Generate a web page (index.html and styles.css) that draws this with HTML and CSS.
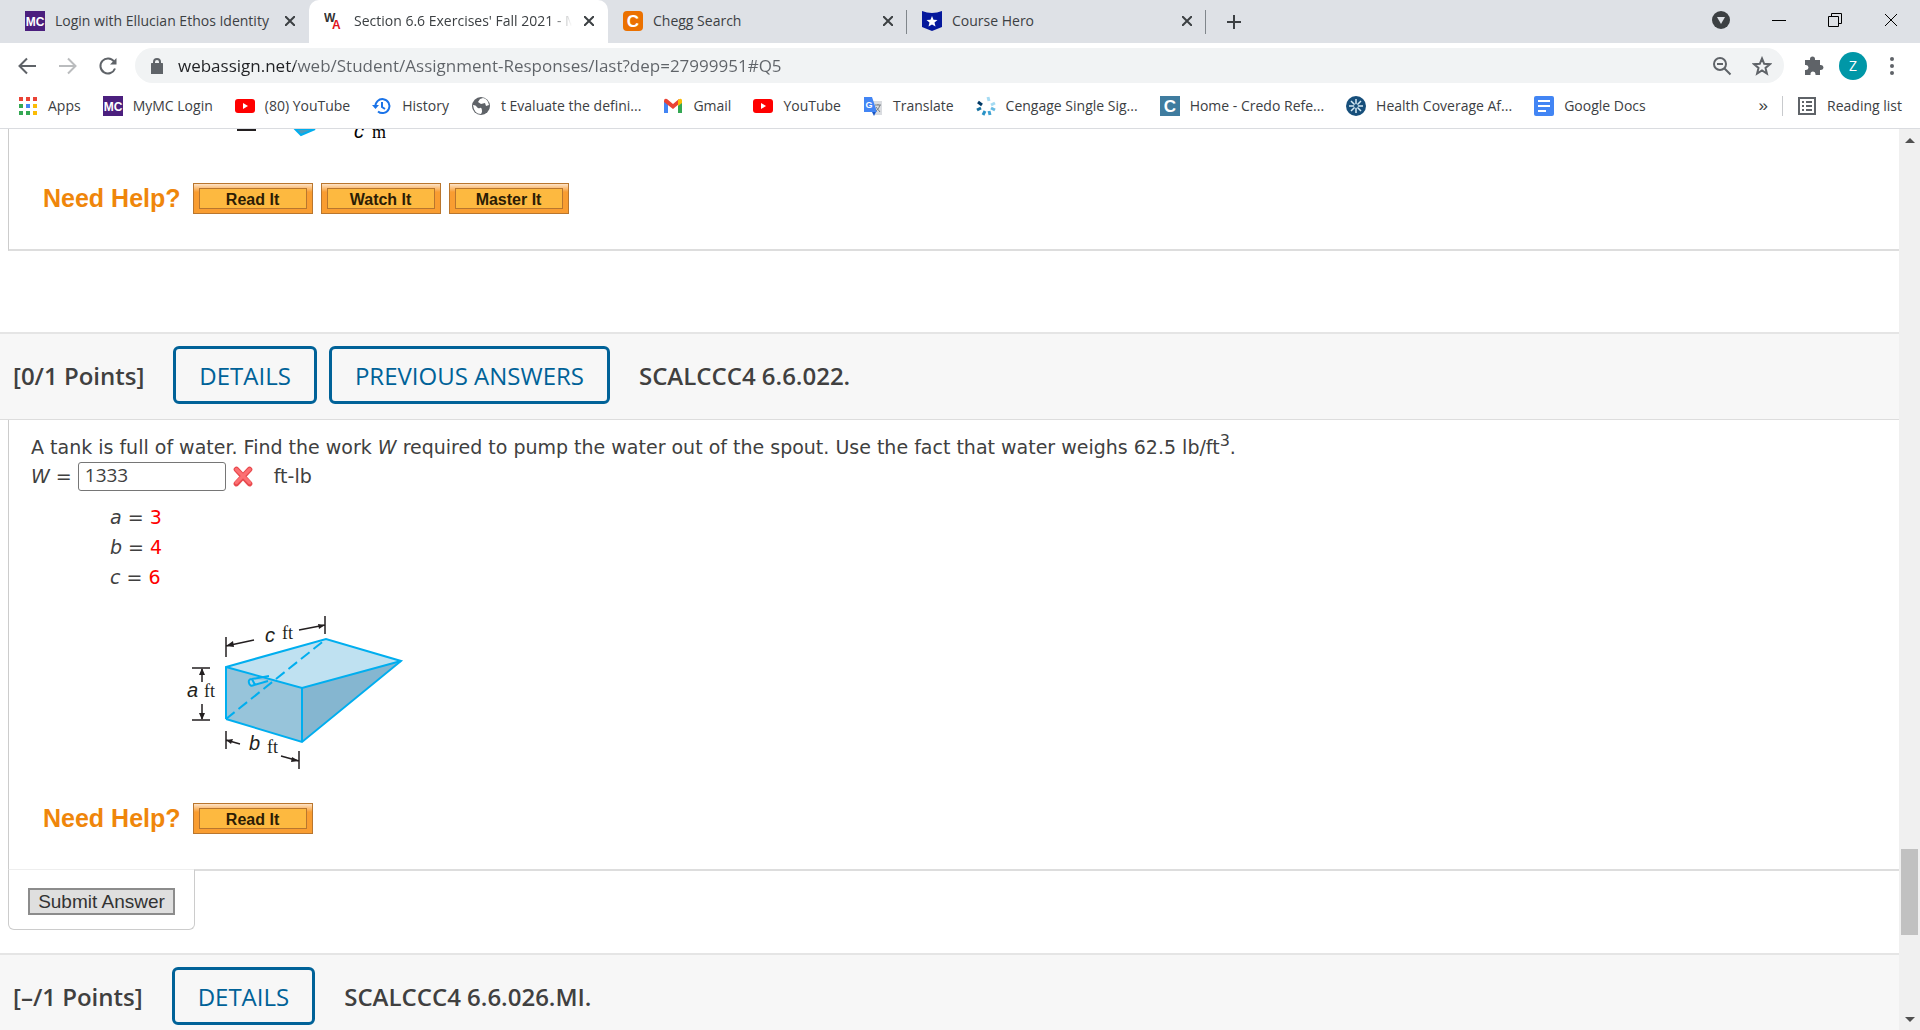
FILE: index.html
```html
<!DOCTYPE html>
<html lang="en">

<head>
    <meta charset="UTF-8">
    <meta name="viewport" content="width=device-width, initial-scale=1.0">
    <title>Section 6.6 Exercises' Fall 2021</title>
    <link rel="stylesheet" href="styles.css">
</head>

<body>
    <header class="browser">
        <div class="tabs">
            <div class="tab">
                <svg class="icon" viewBox="0 0 20 20"><rect width="20" height="20" fill="#4b1f7e"/><text x="10" y="15" class="mc">MC</text></svg>
                <span class="tab-title">Login with Ellucian Ethos Identity</span>
                <button class="close" aria-label="Close tab"><svg viewBox="0 0 10 10"><path d="M0 0l10 10M10 0L0 10"/></svg></button>
            </div>
            <div class="tab active">
                <svg class="icon" viewBox="0 0 20 20"><text x="0" y="11" class="wa">W<tspan x="8" y="18" class="red">A</tspan></text></svg>
                <span class="tab-title fade">Section 6.6 Exercises' Fall 2021 - M</span>
                <button class="close" aria-label="Close tab"><svg viewBox="0 0 10 10"><path d="M0 0l10 10M10 0L0 10"/></svg></button>
            </div>
            <div class="tab line">
                <svg class="icon" viewBox="0 0 20 20"><rect width="20" height="20" rx="4" fill="#eb7100"/><text x="10" y="16" class="logo-letter">C</text></svg>
                <span class="tab-title">Chegg Search</span>
                <button class="close" aria-label="Close tab"><svg viewBox="0 0 10 10"><path d="M0 0l10 10M10 0L0 10"/></svg></button>
            </div>
            <div class="tab line">
                <svg class="icon" viewBox="0 0 20 20"><path d="M0 0q10 4 20 0v16l-10 4-10-4z" fill="#05189c"/><path d="M10 5l1.500 3.700 4 .3-3 2.600 1 3.900-3.500-2.100-3.500 2.100 1-3.900-3-2.600 4-.3z" fill="#fff"/></svg>
                <span class="tab-title">Course Hero</span>
                <button class="close" aria-label="Close tab"><svg viewBox="0 0 10 10"><path d="M0 0l10 10M10 0L0 10"/></svg></button>
            </div>
            <button class="new-tab" aria-label="New tab"><svg viewBox="0 0 16 16"><path d="M8 1v14M1 8h14"/></svg></button>
            <div class="window-buttons">
                <button aria-label="Search tabs"><svg width="18" height="18" viewBox="0 0 18 18"><circle cx="9" cy="9" r="9" fill="#3c4043"/><path d="M5 6h8l-4 7z" fill="#dee1e6"/></svg></button>
                <button aria-label="Minimize"><svg width="14" height="14" viewBox="0 0 14 14"><path d="M0 7.500h14"/></svg></button>
                <button aria-label="Restore"><svg width="14" height="14" viewBox="0 0 14 14"><path d="M.5 3.500h10v10H.5zM3.500 3.500v-3h10v10h-3"/></svg></button>
                <button aria-label="Close"><svg width="14" height="14" viewBox="0 0 14 14"><path d="M1 1l12 12M13 1L1 13"/></svg></button>
            </div>
        </div>

        <div class="toolbar">
            <button aria-label="Back"><svg class="icon" viewBox="0 0 20 20"><path d="M18 10H2M9 2.500L1.500 10l7.500 7.500"/></svg></button>
            <button class="dim" aria-label="Forward"><svg class="icon" viewBox="0 0 20 20"><path d="M1 10h16M10 2.500l7.500 7.500-7.500 7.500"/></svg></button>
            <button aria-label="Reload"><svg class="icon" viewBox="0 0 20 20"><path d="M17 12.500A7.500 7.500 0 1 1 16 5.500"/><path d="M18.500 2v6.500H12z" class="solid"/></svg></button>
            <div class="address">
                <svg class="lock" viewBox="0 0 12 16"><rect y="6" width="12" height="10" rx="1" fill="#5f6368"/><path d="M3 7V4a3 3 0 0 1 6 0v3"/></svg>
                <input type="text" aria-label="Address" value="webassign.net/web/Student/Assignment-Responses/last?dep=27999951#Q5">
                <button aria-label="Zoom"><svg class="icon" viewBox="0 0 20 20"><circle cx="8" cy="8" r="6"/><path d="M5 8h6M12.500 12.500l6 6"/></svg></button>
                <button aria-label="Bookmark this page"><svg class="icon" viewBox="0 0 20 20"><path d="M10 2.500l2.200 5.300 5.600.4-4.300 3.700 1.400 5.600-4.900-3-4.900 3 1.400-5.600-4.300-3.700 5.600-.4z"/></svg></button>
            </div>
            <button aria-label="Extensions"><svg class="icon" viewBox="0 0 20 20"><path class="solid" d="M1 4h5V3a2.500 2.500 0 0 1 5 0v1h5v5h1a2.500 2.500 0 0 1 0 5h-1v5h-4.500v-1a2.500 2.500 0 0 0-5 0v1H1v-5h1a2.500 2.500 0 0 0 0-5H1z"/></svg></button>
            <button class="avatar">Z</button>
            <button aria-label="Menu"><svg class="icon" viewBox="0 0 20 20"><g class="solid"><circle cx="10" cy="3" r="2"/><circle cx="10" cy="10" r="2"/><circle cx="10" cy="17" r="2"/></g></svg></button>
        </div>

        <nav class="bookmarks">
            <a href="#"><svg class="icon" viewBox="0 0 20 20"><path d="M1 1h4v4H1zM8 1h4v4H8zM15 1h4v4h-4z" fill="#ea4335"/><path d="M1 8h4v4H1zM1 15h4v4H1zM8 15h4v4H8z" fill="#34a853"/><path d="M8 8h4v4H8z" fill="#4285f4"/><path d="M15 8h4v4h-4zM15 15h4v4h-4z" fill="#fbbc05"/></svg><span>Apps</span></a>
            <a href="#"><svg class="icon" viewBox="0 0 20 20"><rect width="20" height="20" fill="#4b1f7e"/><text x="10" y="15" class="mc">MC</text></svg><span>MyMC Login</span></a>
            <a href="#"><svg class="icon" viewBox="0 0 20 20"><rect y="3" width="20" height="14" rx="3" fill="#f00"/><path d="M8 7l5 3-5 3z" fill="#fff"/></svg><span>(80) YouTube</span></a>
            <a href="#"><svg class="icon" viewBox="0 0 20 20"><path d="M3.500 11A7 7 0 1 1 6 15.500M10 6v5l3 2" fill="none" stroke="#1a73e8" stroke-width="2"/><path d="M0 9h7l-3.500 4z" fill="#1a73e8"/></svg><span>History</span></a>
            <a href="#"><svg class="icon" viewBox="0 0 20 20"><circle cx="10" cy="10" r="9" fill="#5f6368"/><path d="M2 9q3 0 4 2t3 1 2 4l-1 2q-7 0-8-9M9 3l-2 3 3 2 4-1 1 3 3-1q-1-6-6-7z" fill="#fff"/></svg><span>t Evaluate the defini...</span></a>
            <a href="#"><svg class="icon" viewBox="0 0 20 20"><path d="M1 4.500V17h4V8z" fill="#4285f4"/><path d="M15 8v9h4V4z" fill="#34a853"/><path d="M1 5q0-3 3-2l6 5 6-5v5l-6 5-9-7z" fill="#ea4335"/><path d="M15 4q4-3 4 1v2l-4 3z" fill="#fbbc05"/></svg><span>Gmail</span></a>
            <a href="#"><svg class="icon" viewBox="0 0 20 20"><rect y="3" width="20" height="14" rx="3" fill="#f00"/><path d="M8 7l5 3-5 3z" fill="#fff"/></svg><span>YouTube</span></a>
            <a href="#"><svg class="icon" viewBox="0 0 20 20"><path d="M8 5h11v14h-7z" fill="#dadce0"/><path d="M1 1h8l5 15H1z" fill="#4285f4"/><path d="M9 16h4l-2 4z" fill="#1a56c4"/><text x="6" y="12" class="small-letter">G</text><path d="M12 9h6M15 8v1m2 0q-1 4-4 6m0-4 4 5" stroke="#7a8288" fill="none"/></svg><span>Translate</span></a>
            <a href="#"><svg class="icon" viewBox="0 0 20 20"><g fill="none" stroke-width="3"><path d="M12 1l1 4" stroke="#a5dbf3"/><path d="M19 7l-4 2" stroke="#a5dbf3"/><path d="M19 14l-4-2" stroke="#66bbe3"/><path d="M14 19l-1-4" stroke="#3ea2d3"/><path d="M7 19l2-4" stroke="#2892c6"/><path d="M1 14l4-2" stroke="#16709f"/><path d="M2 6l4 3" stroke="#003865"/></g></svg><span>Cengage Single Sig...</span></a>
            <a href="#"><svg class="icon" viewBox="0 0 20 20"><rect width="20" height="20" fill="#3f7c9f"/><text x="10" y="16" class="logo-letter">C</text></svg><span>Home - Credo Refe...</span></a>
            <a href="#"><svg class="icon" viewBox="0 0 20 20"><circle cx="10" cy="10" r="10" fill="#174f7b"/><path d="M10 3v14M3 10h14M5 5l10 10M15 5L5 15" stroke="#d5eaf5" stroke-width="1.500"/><circle cx="10" cy="10" r="2" fill="#174f7b"/></svg><span>Health Coverage Af...</span></a>
            <a href="#"><svg class="icon" viewBox="0 0 20 20"><rect width="20" height="20" rx="2" fill="#4285f4"/><path d="M4 5h12M4 10h12M4 15h8" stroke="#fff" stroke-width="2"/></svg><span>Google Docs</span></a>
            <button class="more">»</button>
            <a href="#" class="reading"><svg class="icon" viewBox="0 0 20 20"><path d="M2 2h16v16H2z" fill="none" stroke="#5f6368" stroke-width="2"/><path d="M5 6h2M5 10h2M5 14h2M9 6h6M9 10h6M9 14h6" stroke="#5f6368" stroke-width="2"/></svg><span>Reading list</span></a>
        </nav>
    </header>

    <div class="page">
        <main>
            <section class="question first">
                <!-- bottom edge of the previous figure -->
                <svg class="figure-end" width="160" height="12" viewBox="0 0 160 12">
                    <path d="M1 1h19" stroke="#231f20" stroke-width="2"/>
                    <path d="M59 0h20L65 6z" fill="#4a9cc0" stroke="#00aeef" stroke-width="2"/>
                    <text x="118" y="9" class="var">c</text><text x="136" y="9" class="unit">m</text>
                </svg>
                <div class="help">
                    <span class="help-label">Need Help?</span>
                    <button class="help-button">Read It</button>
                    <button class="help-button">Watch It</button>
                    <button class="help-button">Master It</button>
                </div>
            </section>

            <div class="question-header">
                <strong class="points">[0/1 Points]</strong>
                <button class="outline">DETAILS</button>
                <button class="outline">PREVIOUS ANSWERS</button>
                <strong class="name">SCALCCC4 6.6.022.</strong>
            </div>

            <section class="question">
                <p>A tank is full of water. Find the work <i>W</i> required to pump the water out of the spout. Use the fact that water weighs 62.5 lb/ft<sup>3</sup>.</p>
                <div class="answer">
                    <label for="work"><i>W</i> =</label>
                    <input type="text" id="work" value="1333">
                    <svg class="wrong" viewBox="0 0 20 20"><path d="M4 4l12 13M16 4L4 17" stroke="#e8494d" stroke-width="5" stroke-linecap="round"/><path d="M4 4l12 12M16 4L4 16" stroke="#fc7073" stroke-width="3" stroke-linecap="round"/></svg>
                    <span>ft-lb</span>
                </div>
                <ul class="values">
                    <li><i>a</i> = <b>3</b></li>
                    <li><i>b</i> = <b>4</b></li>
                    <li><i>c</i> = <b>6</b></li>
                </ul>
                <svg class="tank" width="230" height="160" viewBox="0 0 230 160">
                    <path d="M40 55l100-28 75 22-99 27z" fill="#bfe1f1"/>
                    <path d="M40 55l76 21v54l-76-23z" fill="#97c4da"/>
                    <path d="M116 76l99-27-99 81z" fill="#85b6d0"/>
                    <g fill="none" stroke="#00aeef" stroke-width="2">
                        <path d="M40 107V55l100-28 75 22-99 81-76-23"/>
                        <path d="M40 55l76 21 99-27M116 76v54"/>
                        <path d="M40 107L140 27" stroke-dasharray="11 5"/>
                        <path d="M66 67q-4 0-3 4t5 2l14-4M66 67l17-3M66 67l3 6" fill="#a9d3e6"/>
                    </g>
                    <g fill="none" stroke="#231f20" stroke-width="1.500">
                        <path d="M40 25v20M139 4v18M40 34l28-6M113 18l26-5"/>
                        <path d="M6 56h18M6 108h18M16 57v13M16 92v15"/>
                        <path d="M40 119v18M113 139v18M40 128l14 4M95 144l18 5"/>
                    </g>
                    <g fill="#231f20">
                        <path d="M40 34l7-5 1 6zM139 13l-7-1 1 5zM16 56l-3 7h6zM16 108l-3-7h6zM40 128l7-1-2 5zM113 149l-7-4-1 5z"/>
                        <text x="79" y="30" class="var">c</text><text x="96" y="27" class="unit">ft</text>
                        <text x="1" y="85" class="var">a</text><text x="18" y="85" class="unit">ft</text>
                        <text x="63" y="138" class="var">b</text><text x="81" y="141" class="unit">ft</text>
                    </g>
                </svg>
                <div class="help">
                    <span class="help-label">Need Help?</span>
                    <button class="help-button">Read It</button>
                </div>
            </section>
            <div class="submit-box">
                <button class="submit">Submit Answer</button>
            </div>

            <div class="question-header">
                <strong class="points">[–/1 Points]</strong>
                <button class="outline">DETAILS</button>
                <strong class="name">SCALCCC4 6.6.026.MI.</strong>
            </div>
        </main>
        <div class="scrollbar">
            <svg width="10" height="5" viewBox="0 0 10 5"><path d="M0 5l5-5 5 5z"/></svg>
            <div class="thumb"></div>
            <svg width="10" height="5" viewBox="0 0 10 5"><path d="M0 0l5 5 5-5z"/></svg>
        </div>
    </div>
</body>

</html>
```
FILE: styles.css
```css
* {
    box-sizing: border-box;
}

body {
    margin: 0;
    height: 100vh;
    display: flex;
    flex-direction: column;
    overflow: hidden;
    background-color: white;
    color: #404040;
    font-family: "DejaVu Sans", Verdana, sans-serif;
    font-size: 19px;
}

button {
    padding: 0;
    border: none;
    background: none;
    cursor: pointer;
}

svg {
    display: block;
    flex: none;
}

.icon {
    width: 20px;
    height: 20px;
}

/* browser bar */
.browser {
    border-bottom: 1px solid #dadce0;
    color: #3c4043;
    font-family: "Open Sans", "Segoe UI", sans-serif;
    font-size: 14px;
}

.tabs {
    display: flex;
    height: 43px;
    padding-left: 10px;
    background-color: #dee1e6;
}

.tab {
    display: flex;
    align-items: center;
    gap: 10px;
    flex: 0 1 299px;
    min-width: 0;
    padding: 0 14px 2px 15px;
}

.active {
    background-color: white;
    border-radius: 10px 10px 0 0;
}

.tab-title {
    flex: 1;
    white-space: nowrap;
}

.fade {
    min-width: 0;
    overflow: hidden;
    -webkit-mask-image: linear-gradient(to right, black 90%, transparent 99%);
    mask-image: linear-gradient(to right, black 90%, transparent 99%);
}

.close svg {
    width: 10px;
    height: 10px;
    stroke: #3c4043;
    stroke-width: 2;
}

.line {
    background: linear-gradient(#80868b, #80868b) right 10px / 1px 24px no-repeat;
}

.new-tab {
    margin: 0 20px;
}

.new-tab svg {
    width: 16px;
    height: 16px;
    stroke: #3c4043;
    stroke-width: 2;
}

.window-buttons {
    display: flex;
    align-items: center;
    gap: 42px;
    margin-left: auto;
    padding: 0 22px 4px 0;
}

.window-buttons svg {
    fill: none;
    stroke: black;
}

.window-buttons circle,
.window-buttons circle + path {
    stroke: none;
}

.toolbar {
    display: flex;
    align-items: center;
    gap: 20px;
    height: 45px;
    padding: 0 18px;
}

.toolbar svg {
    fill: none;
    stroke: #5f6368;
    stroke-width: 2;
}

.toolbar .solid {
    fill: #5f6368;
    stroke: none;
}

.toolbar .dim svg {
    stroke: #babcbe;
}

.address {
    display: flex;
    align-items: center;
    gap: 20px;
    flex: 1;
    height: 35px;
    margin-left: -3px;
    padding: 0 12px 0 16px;
    border-radius: 18px;
    background-color: #f1f3f4;
}

.address .lock {
    width: 12px;
    height: 16px;
}

.address input {
    flex: 1;
    padding: 0;
    margin-left: -5px;
    border: none;
    outline: none;
    font-family: inherit;
    font-size: 17px;
    /* domain is darker than the rest of the address */
    color: transparent;
    background: linear-gradient(to right, #202124 117px, #5f6368 117px);
    -webkit-background-clip: text;
    background-clip: text;
}

.toolbar .avatar {
    width: 28px;
    height: 28px;
    margin: 0 -5px;
    border-radius: 50%;
    background-color: #0097a7;
    color: white;
    font-family: inherit;
    font-size: 14px;
}

.bookmarks {
    display: flex;
    align-items: center;
    gap: 22px;
    height: 40px;
    padding: 0 18px 5px;
}

.bookmarks a {
    display: flex;
    align-items: center;
    gap: 10px;
    color: inherit;
    text-decoration: none;
    white-space: nowrap;
}

.bookmarks .more {
    margin-left: auto;
    color: #3c4043;
    font-size: 17px;
}

.bookmarks .reading {
    margin-left: -8px;
    padding-left: 14px;
    border-left: 1px solid #c8cacd;
}

.mc,
.wa,
.logo-letter,
.small-letter {
    fill: white;
    font-family: "Liberation Sans", Arial, sans-serif;
    font-size: 12px;
    font-weight: bold;
    text-anchor: middle;
}

.wa {
    fill: #333333;
    text-anchor: start;
}

.red {
    fill: #e1131c;
}

.logo-letter {
    font-size: 17px;
}

.small-letter {
    font-size: 9px;
}

/* page */
.page {
    flex: 1;
    display: flex;
    min-height: 0;
}

main {
    flex: 1;
    overflow: hidden;
}

.question {
    margin-left: 8px;
    padding: 15px 22px 35px;
    border-left: 1px solid #cccccc;
    border-bottom: 2px solid #dddddd;
}

.first {
    margin-bottom: 81px;
    padding-top: 0;
}

.figure-end {
    margin: 0 0 42px 205px;
}

.help {
    display: flex;
    align-items: center;
    gap: 8px;
    padding-left: 12px;
}

.help-label {
    margin-right: 4px;
    color: #ef860b;
    font-family: "Liberation Sans", Arial, sans-serif;
    font-size: 25px;
    font-weight: bold;
    line-height: 31px;
}

.help-button {
    width: 120px;
    height: 31px;
    padding-top: 2px;
    border: 1px solid #b9762e;
    /* face, inner line and bevel */
    background-image: linear-gradient(#fdb940, #fdb940), linear-gradient(#b9762e, #b9762e), linear-gradient(#fde3c8, #f99d31 8px);
    background-size: 106px 19px, 108px 21px, 100% 100%;
    background-position: center;
    background-repeat: no-repeat;
    color: #2b1d05;
    font-family: "Liberation Sans", Arial, sans-serif;
    font-size: 16px;
    font-weight: bold;
}

.question-header {
    display: flex;
    align-items: center;
    gap: 12px;
    height: 88px;
    padding: 0 13px 3px;
    border-top: 2px solid #e5e5e5;
    border-bottom: 1px solid #dddddd;
    background-color: #f7f7f7;
    font-family: "Open Sans", sans-serif;
    font-size: 24px;
    white-space: nowrap;
}

.points,
.name {
    font-weight: 600;
}

.points {
    margin-right: 17px;
}

.name {
    margin-left: 17px;
}

.outline {
    height: 58px;
    padding: 0 23px;
    border: 3px solid #006298;
    border-radius: 6px;
    color: #006298;
    font-family: inherit;
    font-size: 24px;
}

.question p {
    margin: 0;
    line-height: 24px;
}

sup {
    font-size: 16px;
    line-height: 0;
    vertical-align: 8px;
}

.answer {
    display: flex;
    align-items: center;
    gap: 6px;
    height: 30px;
    margin-top: 2px;
}

.answer input {
    width: 148px;
    height: 29px;
    padding: 0 6px 2px;
    border: 1px solid #767676;
    border-radius: 3px;
    color: #404040;
    font-family: "Open Sans", sans-serif;
    font-size: 19px;
}

.wrong {
    width: 22px;
    height: 22px;
}

.answer span {
    margin-left: 14px;
}

.values {
    margin: 11px 0 20px 79px;
    padding: 0;
    list-style: none;
    line-height: 30px;
}

.values b {
    color: red;
    font-weight: normal;
}

.tank {
    margin-left: 155px;
    margin-bottom: 31px;
}

.var {
    font-family: "Liberation Sans", Arial, sans-serif;
    font-size: 20px;
    font-style: italic;
}

.unit {
    font-family: "Liberation Serif", serif;
    font-size: 18px;
}

.submit-box {
    width: 187px;
    margin: -2px 0 23px 8px;
    padding: 18px 19px 14px;
    border: 1px solid #cccccc;
    border-top-color: #eeeeee;
    border-radius: 0 0 6px 6px;
    background-color: white;
}

.submit {
    display: block;
    width: 147px;
    height: 27px;
    border: 2px solid #8c8c8c;
    background-color: #dfdfdf;
    color: #333333;
    font-family: "Liberation Sans", Arial, sans-serif;
    font-size: 19px;
}

.scrollbar {
    display: flex;
    flex-direction: column;
    align-items: center;
    width: 21px;
    padding: 9px 0 8px;
    background-color: #f0f0f0;
}

.scrollbar svg {
    fill: #505050;
}

.thumb {
    width: 17px;
    height: 86px;
    margin: auto 0 82px;
    background-color: #c1c1c1;
}
```
